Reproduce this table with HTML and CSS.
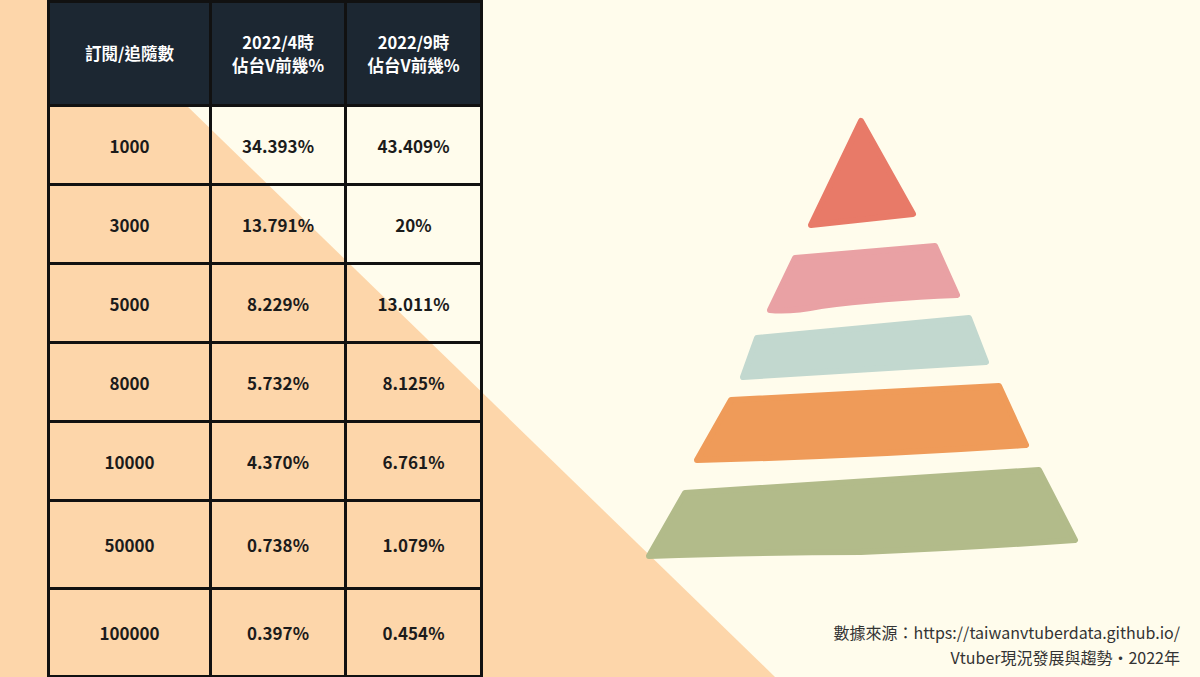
FILE: index.html
```html
<!DOCTYPE html>
<html lang="zh-Hant">
<head>
<meta charset="utf-8">
<title>Vtuber 訂閱數分布</title>
<link rel="stylesheet" href="styles.css">
</head>
<body>
<div class="page">
  <div class="table-wrap">
    <table class="data">
      <colgroup><col class="c1"><col class="c2"><col class="c3"></colgroup>
      <thead>
        <tr class="head"><th>訂閱/追隨數</th><th>2022/4時<br>佔台V前幾%</th><th>2022/9時<br>佔台V前幾%</th></tr>
      </thead>
      <tbody>
        <tr class="r"><td>1000</td><td>34.393%</td><td>43.409%</td></tr>
        <tr class="r"><td>3000</td><td>13.791%</td><td>20%</td></tr>
        <tr class="r"><td>5000</td><td>8.229%</td><td>13.011%</td></tr>
        <tr class="r"><td>8000</td><td>5.732%</td><td>8.125%</td></tr>
        <tr class="r"><td>10000</td><td>4.370%</td><td>6.761%</td></tr>
        <tr class="r tall"><td>50000</td><td>0.738%</td><td>1.079%</td></tr>
        <tr class="r tall"><td>100000</td><td>0.397%</td><td>0.454%</td></tr>
      </tbody>
    </table>
  </div>
  <div class="right">
    <svg class="pyramid" viewBox="482 0 718 620" width="718" height="620" aria-hidden="true">
      <g stroke-linejoin="round" stroke-width="6">
        <path class="p1" d="M860 121 L912 214 L810 225 Z"/>
        <path class="p2" d="M794 258 L934 246 L956 295 Q880 298 820 306 Q790 312 769 310 Z"/>
        <path class="p3" d="M756 338 L968 318 L985 362 L742 377 Z"/>
        <path class="p4" d="M730 400 L998 386 L1025 445 Q860 456 696 460 Z"/>
        <path class="p5" d="M684 493 L1038 470 L1074 540 Q960 548 860 552 Q760 552 648 556 Z"/>
      </g>
    </svg>
    <div class="credit">
      <p>數據來源：https://taiwanvtuberdata.github.io/</p>
      <p>Vtuber現況發展與趨勢・2022年</p>
    </div>
  </div>
</div>
</body>
</html>
```

FILE: styles.css
```css
html, body {
  margin: 0;
  padding: 0;
}
body {
  width: 1200px;
  height: 677px;
  overflow: hidden;
  background: #fffcec;
  font-family: "Noto Sans CJK TC", "Noto Sans", sans-serif;
  position: relative;
}
body::before {
  content: "";
  position: absolute;
  inset: 0;
  background: #fdd6aa;
  clip-path: polygon(0 0, 78px 0, 775px 677px, 0 677px);
  z-index: 0;
}
.page {
  position: relative;
  z-index: 1;
  display: flex;
  height: 677px;
}
.table-wrap {
  padding-left: 47px;
}
.data {
  border-collapse: collapse;
  width: 436px;
  height: 677px;
  table-layout: fixed;
  color: #1b1b1b;
}
.c1 { width: 162px; }
.c2 { width: 135px; }
.c3 { width: 136px; }
.data th, .data td {
  border: 3px solid #111;
  text-align: center;
  vertical-align: middle;
  padding: 0;
  font-weight: 700;
  font-size: 17px;
}
.head {
  height: 104px;
}
.head th {
  background: #1c2732;
  color: #ffffff;
  line-height: 23px;
  font-size: 16.5px;
}
.r {
  height: 79px;
}
.r.tall {
  height: 88px;
}
.right {
  flex: 1;
  display: flex;
  flex-direction: column;
}
.pyramid {
  display: block;
}
.p1 { fill: #e87a68; stroke: #e87a68; }
.p2 { fill: #e9a1a4; stroke: #e9a1a4; }
.p3 { fill: #c2d8cf; stroke: #c2d8cf; }
.p4 { fill: #ef9b59; stroke: #ef9b59; }
.p5 { fill: #b2bb8a; stroke: #b2bb8a; }
.credit {
  text-align: right;
  padding-right: 21px;
  color: #333;
  font-size: 16px;
  line-height: 25px;
}
.credit p {
  margin: 0;
}
```
